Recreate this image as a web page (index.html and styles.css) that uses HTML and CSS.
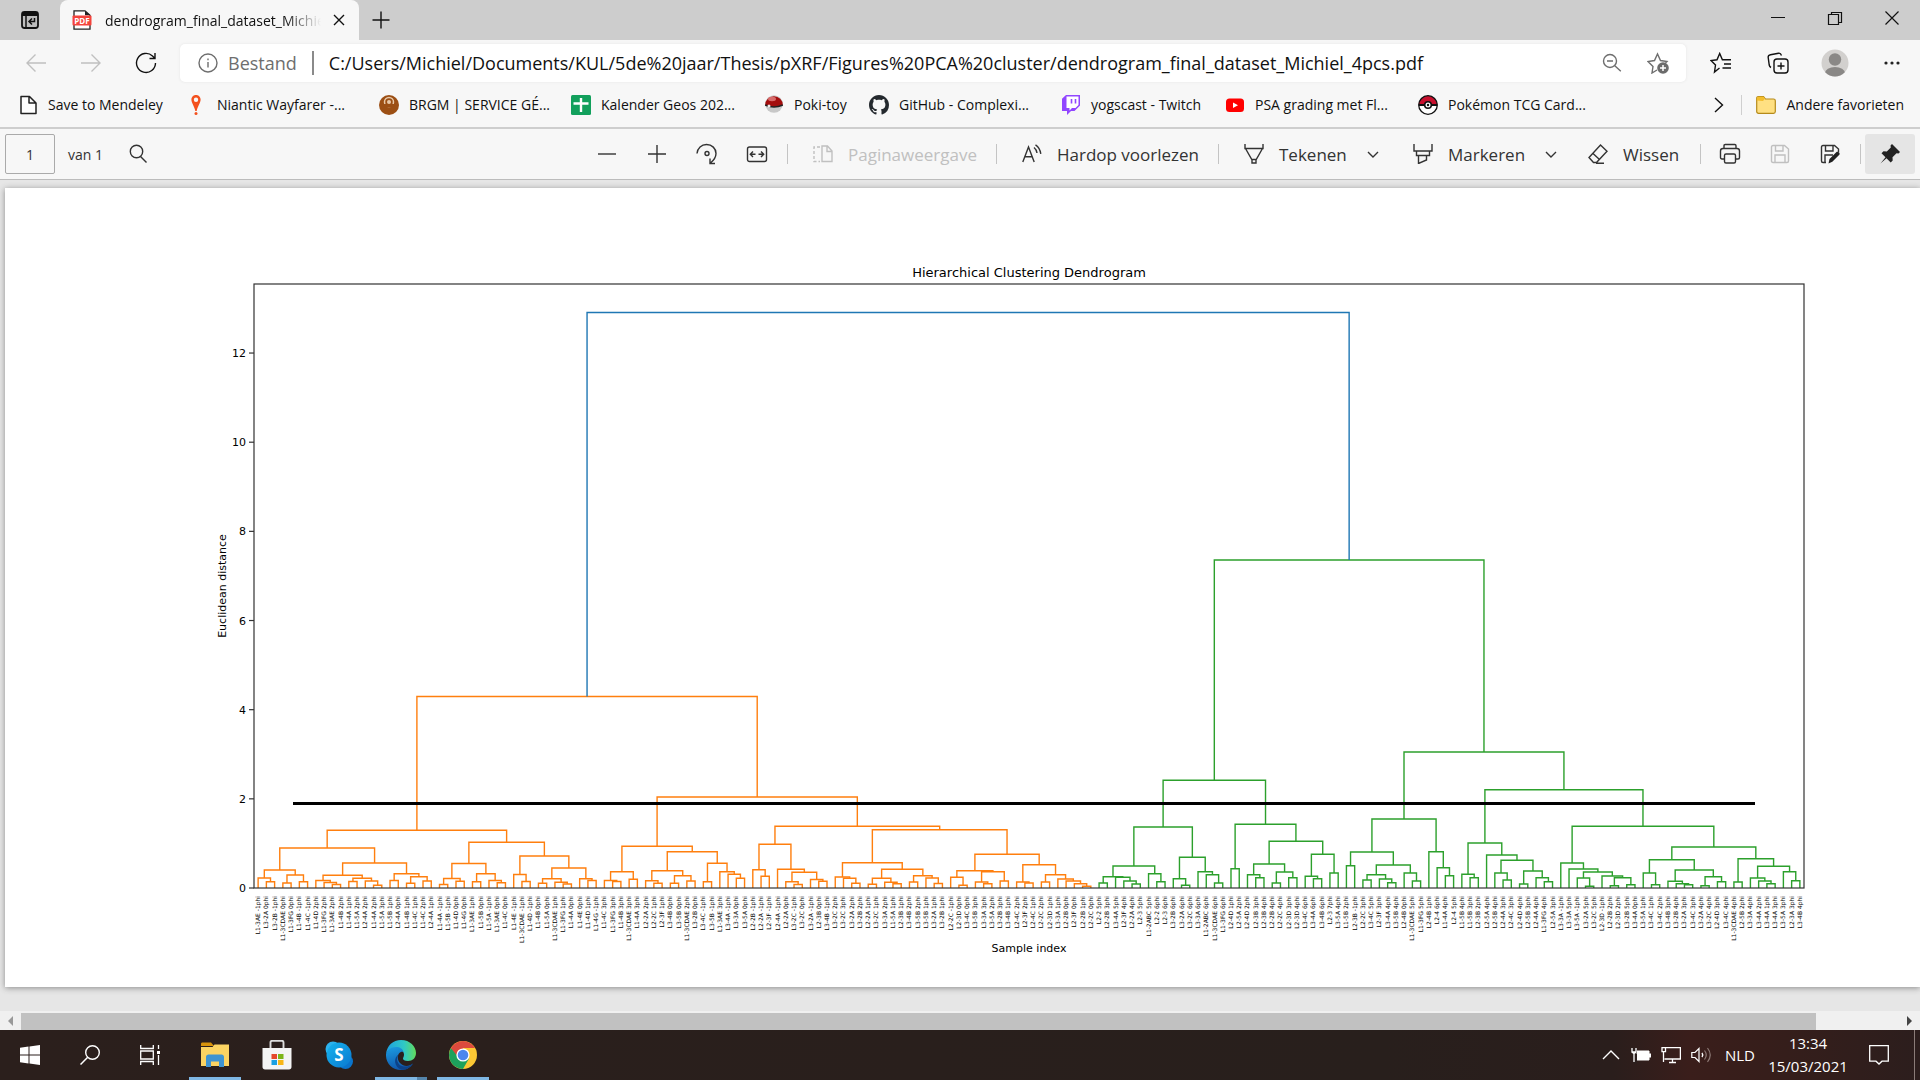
FILE: index.html
```html
<!DOCTYPE html>
<html lang="nl">
<head>
<meta charset="utf-8">
<title>dendrogram_final_dataset_Michiel_4pcs.pdf</title>
<link rel="stylesheet" href="styles.css">
</head>
<body>
<header class="tabstrip">
  <button class="tab-actions" aria-label="Tabbladacties"><svg class="i20" viewBox="0 0 20 20"><rect x="2" y="2" width="16" height="16" rx="2.5" fill="#bdbdbd" stroke="#111" stroke-width="1.8"/><path d="M2 4.5h16" stroke="#111" stroke-width="3"/><path d="M6 5v13" stroke="#111" stroke-width="1.5"/><path d="M14.5 8v3.500h-5M12 8.500l-3 3 3 3" fill="none" stroke="#111" stroke-width="1.5"/></svg></button>
  <div class="tab">
    <svg class="i20" viewBox="0 0 20 20"><path d="M2 .8h11l5 4.500v13.900H2z" fill="#fff" stroke="#222" stroke-width="1.300"/><path d="M13 .8v4.500h5" fill="#222"/><rect x=".5" y="5.500" width="19" height="10" rx="1" fill="#f4433c"/><text x="10" y="13.500" class="pdf-mark">PDF</text></svg>
    <span class="tab-title">dendrogram_final_dataset_Michiel_4pcs.pdf</span>
    <button class="tab-close" aria-label="Tabblad sluiten"><svg class="i16" viewBox="0 0 16 16"><path d="M3 3l10 10M13 3L3 13" class="ln dark"/></svg></button>
  </div>
  <button class="new-tab" aria-label="Nieuw tabblad"><svg class="i20" viewBox="0 0 20 20"><path d="M10 1.500v17M1.500 10h17" class="ln dark"/></svg></button>
  <div class="window-buttons">
    <button aria-label="Minimaliseren"><svg class="i16" viewBox="0 0 16 16"><path d="M1 7.500h14" stroke="#111"/></svg></button>
    <button aria-label="Vorig formaat"><svg class="i16" viewBox="0 0 16 16"><path d="M1.500 4.500h10v10h-10zM4.500 4.500v-2h10v10h-3" fill="none" stroke="#111" stroke-width="1.200"/></svg></button>
    <button aria-label="Sluiten"><svg class="i16" viewBox="0 0 16 16"><path d="M1.500 1.500l13 13M14.500 1.500l-13 13" stroke="#111" stroke-width="1.200"/></svg></button>
  </div>
</header>

<div class="navbar">
  <button class="nav-button" aria-label="Terug" disabled><svg class="i20" viewBox="0 0 20 20"><path d="M20 10H1M9.500 1.500L1 10l8.500 8.500" class="ln faint"/></svg></button>
  <button class="nav-button" aria-label="Vooruit" disabled><svg class="i20" viewBox="0 0 20 20"><path d="M0 10h19M10.500 1.500L19 10l-8.500 8.500" class="ln faint"/></svg></button>
  <button class="nav-button" aria-label="Vernieuwen"><svg class="i22" viewBox="0 0 22 22"><path d="M20.500 11A9.500 9.500 0 1 1 17.500 4l2 2M20 1v5.500h-5.500" class="ln dark"/></svg></button>
  <div class="address">
    <svg class="i20" viewBox="0 0 20 20"><circle cx="10" cy="10" r="9" class="ln grey"/><path d="M10 9v5.500M10 5.500v1.700" class="ln grey"/></svg>
    <label class="scheme" for="url">Bestand</label>
    <input id="url" class="url" type="text" value="C:/Users/Michiel/Documents/KUL/5de%20jaar/Thesis/pXRF/Figures%20PCA%20cluster/dendrogram_final_dataset_Michiel_4pcs.pdf">
    <button class="address-button" aria-label="Uitzoomen"><svg class="i20" viewBox="0 0 20 20"><circle cx="8" cy="8" r="6.500" class="ln grey"/><path d="M5 8h6M12.800 12.800l6 5.500" class="ln grey"/></svg></button>
    <button class="address-button" aria-label="Toevoegen aan favorieten"><svg class="i22" viewBox="0 0 22 22"><path d="M10 18l-5 3 1-6.500-5-5 6.500-1L10.500 2l3 6.500 6.500 1-2 2" class="ln grey"/><circle cx="16" cy="16" r="5.800" fill="#6b6b6b"/><path d="M16 13v6M13 16h6" stroke="#fff" stroke-width="1.500"/></svg></button>
  </div>
  <div class="nav-tools">
    <button aria-label="Favorieten"><svg class="i22" viewBox="0 0 22 22"><path d="M9.500 16l-5 4 1-7-4.500-4.500 6-.7L9.700 1.500l2.700 6.300h8.600M14 12h7M12.500 16h8.500" class="ln dark"/></svg></button>
    <button aria-label="Verzamelingen"><svg class="i22" viewBox="0 0 22 22"><rect x="7" y="7" width="14" height="14" rx="3" class="ln dark"/><path d="M14 10.500v7M10.500 14h7M4 15.500c-1-.5-1.500-1-1.800-2.500L1.200 5.500C1 4 2 3 3.500 2.700l8-1.500c1.800-.3 2.500.8 3 2.300" class="ln dark"/></svg></button>
    <button aria-label="Profiel"><svg class="i28" viewBox="0 0 28 28"><defs><clipPath id="face"><circle cx="14" cy="14" r="13.500"/></clipPath></defs><g clip-path="url(#face)"><rect width="28" height="28" fill="#d2d0ce"/><circle cx="14" cy="10.500" r="6.200" fill="#8a8886"/><ellipse cx="14" cy="24" rx="10" ry="6" fill="#8a8886"/></g></svg></button>
    <button aria-label="Meer"><svg class="i20" viewBox="0 0 20 20"><g fill="#222"><circle cx="4" cy="10" r="1.600"/><circle cx="10" cy="10" r="1.600"/><circle cx="16" cy="10" r="1.600"/></g></svg></button>
  </div>
</div>

<nav class="favorites">
  <div class="bookmarks">
    <a href="#"><svg class="i20" viewBox="0 0 20 20"><path d="M3 1.500h8.500L18 8v10.500H3zM11 1.500V8h7" fill="#fff" stroke="#222" stroke-width="1.500" stroke-linejoin="round"/></svg>Save to Mendeley</a>
    <a href="#"><svg class="i20" viewBox="0 0 20 20"><path fill-rule="evenodd" d="M9 0c3 0 4.600 2.300 4.600 4.600C13.600 8 10.800 11 9.700 16H8.300C7.200 11 4.400 8 4.400 4.600 4.400 2.300 6 0 9 0zm0 2.500a2.200 2.200 0 1 0 .01 4.400A2.200 2.200 0 0 0 9 2.500z" fill="#f4511e"/><circle cx="9" cy="18.500" r="1.500" fill="#f4511e"/></svg>Niantic Wayfarer -...</a>
    <a href="#"><svg class="i20" viewBox="0 0 20 20"><circle cx="10" cy="10" r="10" fill="#9c4f14"/><circle cx="10" cy="7" r="4.500" fill="none" stroke="#e8c8a8" stroke-width="1.500"/><circle cx="10" cy="7" r="2" fill="#e8c8a8"/><path d="M5 9h10v3H5z" fill="#9c4f14"/></svg>BRGM | SERVICE GÉ...</a>
    <a href="#"><svg class="i20" viewBox="0 0 20 20"><rect width="20" height="20" rx="1.500" fill="#12a05c"/><path d="M10 3v14M2.500 8.500h15" stroke="#fff" stroke-width="2.400"/></svg>Kalender Geos 202...</a>
    <a href="#"><svg class="i20" viewBox="0 0 20 20"><circle cx="10" cy="9" r="8.800" fill="#c8c8c8"/><path d="M1.200 10a8.800 8.800 0 1 1 17.600 0q-8.800 4-17.600 0z" fill="#a30d0d"/><ellipse cx="8" cy="4" rx="4" ry="2.200" fill="#d86a6a"/><path d="M1.200 10q8.800 4 17.600 0" stroke="#222" stroke-width="1.500" fill="none"/><circle cx="5" cy="11" r="1.500" fill="#eee"/></svg>Poki-toy</a>
    <a href="#"><svg class="i20" viewBox="0 0 16 16"><path fill="#24292e" d="M8 0C3.580 0 0 3.580 0 8c0 3.540 2.290 6.530 5.470 7.590.4.070.55-.17.55-.38 0-.19-.01-.82-.01-1.490-2.010.37-2.530-.49-2.690-.94-.09-.23-.48-.94-.82-1.130-.28-.15-.68-.52-.01-.53.63-.01 1.080.58 1.230.82.72 1.210 1.870.87 2.330.66.07-.52.28-.87.51-1.070-1.780-.2-3.640-.89-3.640-3.950 0-.87.31-1.590.82-2.150-.08-.2-.36-1.020.08-2.120 0 0 .67-.21 2.200.82.64-.18 1.320-.27 2-.27s1.360.09 2 .27c1.530-1.040 2.200-.82 2.200-.82.44 1.100.16 1.920.08 2.120.51.56.82 1.270.82 2.150 0 3.070-1.870 3.750-3.650 3.950.29.25.54.73.54 1.480 0 1.070-.01 1.930-.01 2.200 0 .21.15.46.55.38A8 8 0 0 0 16 8c0-4.420-3.580-8-8-8z"/></svg>GitHub - Complexi...</a>
    <a href="#"><svg class="i20" viewBox="0 0 20 20"><path d="M5 0L1 3.800V16h5v4l4-4h3.500L19 10.500V0z" fill="#9146ff"/><path d="M5.500 1.500h12V10l-3 3h-3.500L8.500 15.500V13h-3z" fill="#fff"/><path d="M10.500 4v4.500M14.500 4v4.500" stroke="#9146ff" stroke-width="1.600"/></svg>yogscast - Twitch</a>
    <a href="#"><svg class="i20" viewBox="0 0 20 20"><rect x="1" y="3.500" width="18" height="13.500" rx="3.500" fill="#f00"/><path d="M8 7.500l5 2.800-5 2.800z" fill="#fff"/></svg>PSA grading met Fl...</a>
    <a href="#"><svg class="i20" viewBox="0 0 20 20"><circle cx="10" cy="10" r="9.300" fill="#fff"/><path d="M.7 10a9.300 9.300 0 0 1 18.600 0z" fill="#c8102e"/><circle cx="10" cy="10" r="9.300" fill="none" stroke="#111" stroke-width="1.300"/><path d="M1 10h18" stroke="#111" stroke-width="2"/><circle cx="10" cy="10" r="3.300" fill="#fff" stroke="#111" stroke-width="1.600"/><circle cx="10" cy="10" r="1.200" fill="#111"/></svg>Pokémon TCG Card...</a>
  </div>
  <button class="more-favorites" aria-label="Meer favorieten"><svg class="i16" viewBox="0 0 16 16"><path d="M4 1l7.500 7L4 15" class="ln dark"/></svg></button>
  <a class="other" href="#"><svg class="i20" viewBox="0 0 20 20"><path d="M.7 3.500C.7 2 1.500 1.500 2.500 1.500h5l2 2.500h8c1.200 0 1.800.8 1.800 1.800V16.500c0 1-.8 1.800-1.800 1.800h-15C1.500 18.300.7 17.500.7 16.500z" fill="#ffe082" stroke="#b58a1b" stroke-width="1.200"/><path d="M.9 5.500V3.500c0-1 .6-1.800 1.600-1.800h5L9 3.800 7 6z" fill="#f3bd2c"/></svg>Andere favorieten</a>
</nav>

<div class="pdfbar">
  <input class="page-number" type="text" value="1" aria-label="Paginanummer">
  <span class="page-count">van 1</span>
  <button class="find" aria-label="Zoeken"><svg class="i20" viewBox="0 0 20 20"><circle cx="8.500" cy="7.500" r="6.200" class="ln"/><path d="M12.500 12.500l6 6" class="ln"/></svg></button>
  <div class="pdf-tools">
    <button class="tool" aria-label="Uitzoomen"><svg class="i20" viewBox="0 0 20 20"><path d="M1 10h18" class="ln"/></svg></button>
    <button class="tool" aria-label="Inzoomen"><svg class="i20" viewBox="0 0 20 20"><path d="M1 10h18M10 1v18" class="ln"/></svg></button>
    <button class="tool" aria-label="Draaien"><svg class="i22" viewBox="0 0 22 22"><path d="M1 10.500C1.500 5 5.500 1.500 10.500 1.500c5.500 0 9.500 4 9.500 9 0 4-2.500 7-5.500 9.500M19 20.500h-5v-5" class="ln"/><circle cx="11" cy="10.500" r="2" class="ln"/></svg></button>
    <button class="tool" aria-label="Aan breedte aanpassen"><svg class="i22" viewBox="0 0 22 22"><rect x="1.500" y="4" width="19" height="14.500" rx="2" class="ln"/><path d="M4.500 11.200h5M12.500 11.200h5M7 8.500l-2.700 2.700L7 14M15 8.500l2.700 2.700L15 14" class="ln"/></svg></button>
    <i class="sep"></i>
    <button class="tool view" disabled><svg class="i20" viewBox="0 0 20 20"><path d="M7 3H1v14.500h6" class="ln faint" stroke-dasharray="3 2"/><path d="M9 2h5.500L19 7v10.500H9zM14 2v5.500h5" class="ln faint"/></svg>Paginaweergave</button>
    <i class="sep"></i>
    <button class="tool aloud"><svg class="i20" viewBox="0 0 20 20"><path d="M.8 18L6.500 3l5.700 15M2.800 12.700h7.500M12 3.500q2.500 2 3 5.500M13.500.8q4.500 3 5.300 9" class="ln"/></svg>Hardop voorlezen</button>
    <i class="sep"></i>
    <button class="tool draw"><svg class="i20" viewBox="0 0 20 20"><path d="M1 0v4.500h18V0M1.500 4.500L8 16v3h4v-3l6.500-11.500M7.500 15.500h5" class="ln"/></svg>Tekenen</button>
    <button class="tool drop" aria-label="Tekenopties"><svg class="i16" viewBox="0 0 16 16"><path d="M3 6l5 5 5-5" class="ln"/></svg></button>
    <button class="tool mark"><svg class="i20" viewBox="0 0 20 20"><path d="M1 0v7h18V0M3.500 7v4.500h13V7M5.500 11.500V19.500l8-3.500v-4.500" class="ln"/></svg>Markeren</button>
    <button class="tool drop" aria-label="Markeeropties"><svg class="i16" viewBox="0 0 16 16"><path d="M3 6l5 5 5-5" class="ln"/></svg></button>
    <button class="tool erase"><svg class="i20" viewBox="0 0 20 20"><path d="M12.500 1L19 7.200 8.500 18.500H5.500L1 13.500zM5 9.500l6.500 6M8 19.300h8" class="ln"/></svg>Wissen</button>
    <i class="sep"></i>
    <button class="tool" aria-label="Afdrukken"><svg class="i22" viewBox="0 0 22 22"><path d="M5 5.500V2.700c0-.8.500-1.200 1.200-1.200h9.600c.7 0 1.200.4 1.200 1.200v2.800M5.500 16H3c-1 0-1.500-.7-1.500-1.500V8c0-1.500 1-2.500 2.500-2.500h14c1.500 0 2.500 1 2.500 2.500v6.500c0 .8-.5 1.500-1.500 1.500h-2.500" class="ln"/><rect x="5.500" y="11" width="11" height="9" rx="1.500" class="ln"/></svg></button>
    <button class="tool" aria-label="Opslaan" disabled><svg class="i20" viewBox="0 0 20 20"><path d="M3 1.500h11.500L18.500 5v12c0 1-.5 1.500-1.500 1.500H3c-1 0-1.500-.5-1.500-1.500V3c0-1 .5-1.500 1.500-1.500zM5.500 1.500V7H13V1.500M5 18.500V11h10v7.500" class="ln faint"/></svg></button>
    <button class="tool" aria-label="Opslaan als"><svg class="i20" viewBox="0 0 20 20"><path d="M18.500 8V5l-4-3.500H3C2 1.500 1.500 2 1.500 3v14c0 1 .5 1.500 1.500 1.500h3M5.500 1.500V7H13V1.500M5 18.500V11h8" class="ln"/><path d="M8.500 19.500l1-4.500L16.500 8c1.500-1 4 1 2.800 2.800l-7 7z" fill="#222"/></svg></button>
    <i class="sep"></i>
    <button class="tool pin" aria-label="Werkbalk losmaken"><svg class="i22" viewBox="0 0 22 22"><path d="M13 1l8 8-1.500 1.500-2-.3-4 4 .2 3.300-2 2L7.500 15.300 1.500 20.500l5-6.200L2.500 10.300l2-2 3.300.2 4-4-.3-2z" fill="#222"/></svg></button>
  </div>
</div>

<main class="viewer">
  <article class="sheet">
    <svg id="chart" class="chart" viewBox="0 0 1915 799" role="img" aria-label="Hierarchical Clustering Dendrogram"></svg>
  </article>
</main>
<div class="scrollbar"><button class="arrow prev" aria-label="Naar links"></button><div class="track"><div class="thumb"></div></div><button class="arrow next" aria-label="Naar rechts"></button></div>

<footer class="taskbar">
  <div class="apps">
    <button class="sys" aria-label="Start"><svg class="i20" viewBox="0 0 20 20"><path d="M0 2.800L8.500 1.600V9.500H0zM9.500 1.500L20 0v9.500H9.500zM0 10.500h8.500v7.900L0 17.200zM9.500 10.500H20V20L9.500 18.500z" fill="#fff"/></svg></button>
    <button class="sys" aria-label="Zoeken"><svg class="i20" viewBox="0 0 20 20"><circle cx="12.500" cy="7.500" r="6.800" fill="none" stroke="#fff" stroke-width="1.400"/><path d="M7.700 12.300L.5 19.500" stroke="#fff" stroke-width="1.500"/></svg></button>
    <button class="sys" aria-label="Taakweergave"><svg class="i20" viewBox="0 0 20 20"><path d="M.7 0v3.500h12.600V0M.7 20v-3.500h12.600V20M.7 6h12.600v8H.7zM18.500 0v4M18.500 10v10" fill="none" stroke="#fff" stroke-width="1.300"/><path d="M17 6h3v3h-3z" fill="#fff"/></svg></button>
    <button class="app open" aria-label="Verkenner"><svg class="i30" viewBox="0 0 30 30"><path d="M1 4c0-1 .5-1.500 1.500-1.500H11L14 6H1z" fill="#d8930b"/><path d="M1 7h11.500l2-2.500H29V26H1z" fill="#fcd462"/><path d="M6 27V17c0-1.500 1-2.500 2.500-2.500h13c1.500 0 2.500 1 2.500 2.500v10h-5v-5.500h-8V27z" fill="#3f94d1"/></svg></button>
    <button class="app" aria-label="Microsoft Store"><svg class="i30" viewBox="0 0 30 30"><path d="M8.500 9V2.500c0-1 .7-1.700 1.700-1.700h9.600c1 0 1.700.7 1.700 1.700V9" fill="none" stroke="#ddd" stroke-width="1.900"/><path d="M.5 8h29v19c0 1.500-1 2.500-2.500 2.500H3c-1.500 0-2.500-1-2.500-2.500z" fill="#f4f4f4"/><path d="M9.500 14H15v5H9.500z" fill="#e5482b"/><path d="M16 14h5.500v5H16z" fill="#7cb518"/><path d="M9.500 20H15v5H9.500z" fill="#1ba0e2"/><path d="M16 20h5.500v5H16z" fill="#f8b617"/></svg></button>
    <button class="app" aria-label="Skype"><svg class="i30" viewBox="0 0 30 30"><defs><linearGradient id="sk" x2="1" y2="1"><stop stop-color="#16b4ee"/><stop offset="1" stop-color="#0a78d0"/></linearGradient></defs><circle cx="9" cy="9" r="7.500" fill="#2cb2ee"/><circle cx="21.500" cy="21.500" r="7.500" fill="#0a74cc"/><circle cx="15" cy="15" r="12.500" fill="url(#sk)"/><text x="15" y="21" class="skype-mark">S</text></svg></button>
    <button class="app open grouped" aria-label="Microsoft Edge"><svg class="i30" viewBox="0 0 30 30"><defs><linearGradient id="e1"><stop stop-color="#1d9fe0"/><stop offset=".6" stop-color="#2fc8c6"/><stop offset="1" stop-color="#62db5c"/></linearGradient><linearGradient id="e2" x2=".3" y2="1"><stop stop-color="#1b9de2"/><stop offset="1" stop-color="#1059ad"/></linearGradient></defs><path d="M0 14C1 5.500 7 0 15 0c9 0 15 6.500 15 13 0 5-3.500 8-8 8-3.500 0-5-1-5-2.500 0-1 1-1.500 1-4C18 11 14 8 10 8 5 8 1 11 0 14z" fill="url(#e1)"/><path d="M0 14c1-4 5-7 10-7 4 0 7 2 7.500 5-5-1.500-8 6-3.500 11 4 4 9 3.500 13 .5C24 28 20 30 15 30 6 30-.5 23 0 14z" fill="url(#e2)"/><path d="M13 14c-4 5-1 11 3 12 4 1.500 8 0 11.200-2.800C24 28 20 30 15.500 29.800 8 27 7 18 13 14z" fill="#0d4288"/></svg></button>
    <button class="app open" aria-label="Google Chrome"><svg class="i30" viewBox="0 0 30 30"><circle cx="15" cy="15" r="14" fill="#fbc734"/><path d="M15 15L2.880 8A14 14 0 0 0 15 29l6-10.500z" fill="#1da15c"/><path d="M15 15H8.500L2.880 8A14 14 0 0 1 27.120 8H15z" fill="#dc4a3d"/><circle cx="15" cy="15" r="6.600" fill="#fff"/><circle cx="15" cy="15" r="5.300" fill="#4b87ee"/></svg></button>
  </div>
  <div class="tray">
    <button aria-label="Verborgen pictogrammen"><svg class="i20" viewBox="0 0 20 20"><path d="M2 14l8-8 8 8" class="ln white"/></svg></button>
    <button aria-label="Batterij"><svg class="i20" viewBox="0 0 20 20"><path d="M5 6h13v9H5z" fill="#fff" stroke="#fff"/><path d="M19 8.500v4" stroke="#fff" stroke-width="2"/><path d="M2 17h2.500V9M1.500 4v3.500q1.500 2 3 0V4M1 5h5M3 8.500V17" fill="none" stroke="#2b1f1d" stroke-width="3"/><path d="M3 17V9M1 3v4h4V3M1 7q2 3 4 0" fill="none" stroke="#fff" stroke-width="1.300"/></svg></button>
    <button aria-label="Netwerk"><svg class="i20" viewBox="0 0 20 20"><path d="M5 2.700h14.400V14H3.500M11.500 14v3.500M8 17.500h7M2.500 17V7M1 2.700h3.500v4H1z" fill="none" stroke="#fff" stroke-width="1.300"/></svg></button>
    <button aria-label="Volume"><svg class="i20" viewBox="0 0 20 20"><path d="M.8 7.500H4l4-4v13l-4-4H.8z" fill="none" stroke="#fff" stroke-width="1.200"/><path d="M11 8q1.500 2 0 4" class="ln white"/><path d="M13.500 5.500q3.500 4.500 0 9M16.500 3q5.500 7 0 14" fill="none" stroke="#8d7a76" stroke-width="1.200"/></svg></button>
    <span class="lang">NLD</span>
    <time class="clock" datetime="2021-03-15T13:34">13:34<br>15/03/2021</time>
    <button class="notify" aria-label="Meldingen"><svg class="i20" viewBox="0 0 20 20"><path d="M.7.7h18.600v15.500H13L10 19l-3-2.800H.7z" fill="none" stroke="#fff" stroke-width="1.300"/></svg></button>
    <i class="peek"></i>
  </div>
</footer>
<script src="chart.js"></script>
</body>
</html>
```

FILE: styles.css
```css
* { box-sizing: border-box; }
body {
  margin: 0;
  min-height: 100vh;
  display: flex;
  flex-direction: column;
  background: #e6e6e6;
  color: #111;
  font-family: "Open Sans", "Noto Sans", sans-serif;
  font-size: 14px;
  overflow: hidden;
}
button, input { font: inherit; color: inherit; border: 0; background: none; padding: 0; margin: 0; }
button { display: flex; align-items: center; justify-content: center; }
a { color: inherit; text-decoration: none; }
svg { display: block; flex: none; }
.i16 { width: 16px; height: 16px; }
.i20 { width: 20px; height: 20px; }
.i22 { width: 22px; height: 22px; }
.i28 { width: 28px; height: 28px; }
.i30 { width: 30px; height: 30px; }
.ln { fill: none; stroke: #333; stroke-width: 1.4; }
.ln.dark { stroke: #111; }
.ln.grey { stroke: #6e6e6e; }
.ln.faint { stroke: #c0c0c0; }
.ln.white { stroke: #fff; }
.pdf-mark { font: bold 8px "Open Sans", sans-serif; fill: #fff; text-anchor: middle; }
.skype-mark { font: bold 17px "Open Sans", sans-serif; fill: #fff; text-anchor: middle; }

.tabstrip { display: flex; height: 40px; background: #cdcdcd; }
.tab-actions { width: 60px; }
.tab {
  width: 299px;
  display: flex;
  align-items: center;
  padding: 0 12px;
  background: #f7f7f7;
  border-radius: 8px 8px 0 0;
}
.tab-title {
  width: 218px;
  margin: 0 8px 0 13px;
  overflow: hidden;
  white-space: nowrap;
  mask-image: linear-gradient(to right, #000 180px, transparent 216px);
}
.new-tab { width: 44px; }
.window-buttons { margin-left: auto; display: flex; }
.window-buttons button { width: 57px; height: 36px; }

.navbar { display: flex; align-items: center; height: 46px; padding-left: 8px; background: #f7f7f7; }
.nav-button { width: 55px; height: 40px; }
.address {
  flex: 1;
  display: flex;
  align-items: center;
  height: 38px;
  margin-left: 7px;
  padding: 0 5px 0 18px;
  background: #fff;
  border-radius: 5px;
  box-shadow: 0 0 3px #e4e4e4;
}
.scheme { font-size: 18px; color: #6e6e6e; margin-left: 10px; padding-right: 15px; }
.url { flex: 1; height: 24px; border-left: 2px solid #8a8a8a; padding-left: 15px; font-size: 18px; }
.address-button { width: 46px; }
.nav-tools { display: flex; padding-left: 6px; }
.nav-tools button { width: 57px; height: 38px; }

.favorites {
  display: flex;
  align-items: center;
  height: 43px;
  padding: 0 16px 4px 18px;
  background: #f7f7f7;
  border-bottom: 2px solid #cecece;
}
.bookmarks {
  flex: 1;
  display: grid;
  grid-template-columns: 169px 192px 192px 193px 105px 192px 164px 193px auto;
}
.favorites a { display: flex; align-items: center; gap: 10px; white-space: nowrap; }
.more-favorites { width: 44px; }
.other { border-left: 1px solid #cfcfcf; padding-left: 14px; }

.pdfbar {
  display: flex;
  align-items: center;
  height: 51px;
  padding: 0 5px;
  background: #f7f7f7;
  border-bottom: 1px solid #bcbcbc;
  color: #333;
}
.page-number { width: 50px; height: 40px; border: 1px solid #aaa; border-radius: 2px; text-align: center; }
.page-count { margin-left: 13px; width: 44px; }
.find { width: 52px; height: 40px; }
.pdf-tools { margin-left: auto; display: flex; align-items: center; font-size: 17px; }
.tool { width: 50px; height: 40px; gap: 15px; white-space: nowrap; }
.tool:disabled { color: #c0c0c0; }
.sep { width: 10px; height: 20px; background: linear-gradient(#c4c4c4, #c4c4c4) center / 1px 100% no-repeat; }
.view, .aloud, .draw, .mark, .erase { justify-content: flex-start; padding-left: 21px; }
.view { width: 199px; }
.aloud { width: 212px; }
.draw { width: 130px; }
.mark { width: 139px; }
.erase { width: 125px; padding-left: 18px; }
.drop { width: 39px; }
.pin { background: #e5e5e5; border-radius: 3px; }

.viewer { flex: 1; padding: 8px 0 24px 5px; background: #e6e6e6; }
.sheet { background: #fff; box-shadow: 0 1px 6px #8c8c8c; }
.chart { width: 100%; height: auto; }
.chart text { font-family: "DejaVu Sans", sans-serif; font-size: 12px; fill: #000; }
.chart .title { font-size: 13px; text-anchor: middle; }
.chart .caption { font-size: 11px; text-anchor: middle; }
.chart .tick { font-size: 11px; text-anchor: end; }
.chart .leaf { font-size: 6px; text-anchor: end; }
.chart .axis { fill: none; stroke: #333; stroke-width: 1.2; }
.chart .link { fill: none; stroke-width: 1.4; }
.chart .cut { stroke: #000; stroke-width: 3; }

.scrollbar { display: flex; height: 19px; background: #f0f0f0; }
.arrow { width: 21px; }
.arrow::before { content: ""; border: 5px solid transparent; }
.prev::before { border-right-color: #999; border-left-width: 0; }
.next::before { border-left-color: #444; border-right-width: 0; }
.track { flex: 1; padding-top: 2px; }
.thumb { width: 95.6%; height: 17px; background: #c1c1c1; }

.taskbar {
  display: flex;
  justify-content: space-between;
  height: 50px;
  color: #fff;
  background: linear-gradient(90deg, #2b1f1c 0%, #281f1c 72%, #2a1e1c 84%, #3a1e1b 88%, #351e1b 93%, #2c1e1d 100%);
}
.apps, .tray { display: flex; }
.sys { width: 60px; }
.app { width: 52px; margin-right: 10px; border-bottom: 3px solid transparent; padding-top: 3px; }
.apps .sys:nth-child(3) { margin-right: 9px; }
.open { border-bottom-color: #7fb7e4; }
.grouped { border-image: linear-gradient(90deg, #7fb7e4 78%, #5585ab 78%) 3; }
.tray { align-items: center; font-size: 15px; }
.tray button { width: 30px; height: 50px; }
.lang { width: 36px; margin-left: 9px; }
.clock { width: 86px; margin-left: 4px; text-align: center; line-height: 23px; }
.tray .notify { width: 56px; }
.peek { width: 6px; height: 50px; margin-left: 7px; border-left: 1px solid #8a7c78; }
```

FILE: chart.js
```js
// A cluster is [height above the baseline, left, right]; L is a single sample.
const L = 0;
const orange1 = [57.7,
  [40,
    [18, [10, L, [6.3, L, L]], [13, [5, L, L], [6.3, L, L]]],
    [25,
      [12.7, [7.5, L, [5.5, L, [3.5, L, L]]], [9.7, [6.5, L, L], [7, L, [2.7, L, L]]]],
      [14.3, [7.5, L, L], [11.3, [4.7, L, L], [7, L, L]]]]],
  [45.7,
    [24.5, [9.5, [3.5, L, L], [6.7, L, L]], [14.3, [6.3, L, L], [7.5, L, [5.3, L, L]]]],
    [32,
      [13.5, L, [6.5, L, L]],
      [20, [9.3, [4.7, L, L], [5.7, L, [4, L, L]]], [9.3, L, [7.5, L, L]]]]]];
const orange2 = [91,
  [41.7,
    [16.3, [7.5, L, [6.5, L, L]], [8.7, L, L]],
    [36.3,
      [17.3, [7.3, L, [4.7, L, L]], [12.3, [4.7, L, L], [7, L, L]]],
      [24.7, [6.3, L, L], [16.3, L, [13.7, L, [9.7, L, L]]]]]],
  [61.7,
    [43.7,
      [18.3, L, [11.7, L, L]],
      [18.7, L, [15.7, [6.3, L, [3.5, L, L]], [8.5, L, [6.7, L, L]]]]],
    [58.3,
      [25.3,
        [11, L, [9.7, L, [4.7, L, L]]],
        [18.7, [9.7, [3.7, L, L], [5.7, L, [4.3, L, L]]], [12.3, [6, L, L], [10, L, [4.5, L, L]]]]],
      [33.7,
        [17.3, [10.7, L, [2.7, L, L]], [16.3, [6, L, [4.3, L, L]], [7, L, L]]],
        [23.3,
          [6, L, [5, L, L]],
          [13.3, [6, L, L], [9, L, [7, L, [4.3, L, [1.7, L, L]]]]]]]]]];
const green1 = [107.7,
  [61,
    [22, [11.3, [5, L, L], [10.7, L, [7, L, [4, L, L]]]], [14.3, L, [6.3, L, L]]],
    [30.7, [9.3, L, [2.7, L, L]], [16.3, L, [13.3, L, [5, L, L]]]]],
  [63.7,
    [19.3, L, L],
    [46.7,
      [24, [13.3, L, [10.3, L, L]], [16, [5, L, L], [10.3, L, L]]],
      [33.7, [11.7, L, [9.3, L, L]], [15, L, L]]]]];
const green2 = [136,
  [69,
    [36,
      [22.3, L, L],
      [23, [13.3, [8, L, L], [9, L, [5.3, L, L]]], [15, L, [7, L, L]]]],
    [36.3, L, [20.3, L, [12.3, L, L]]]],
  [98.3,
    [45,
      [13.7, L, [10.3, L, L]],
      [33, L, [27.7, [15, L, [8, L, L]], [17, [4, L, L], [10.3, L, [6.3, L, L]]]]]],
    [61.7,
      [25, L, [19, L, [16, [10, L, [1.7, L, L]], [12, L, [10.3, [2.3, L, L], [3.3, L, L]]]]]],
      [41,
        [28.3,
          [15, L, [3.3, L, L]],
          [18, [6.7, L, [4.3, L, [3.3, L, L]]], [11.3, [2.3, L, L], [6.3, L, L]]]],
        [29.3,
          [6, L, L],
          [21.7, [10, L, [7, L, [4.3, L, L]]], [16.3, L, [7.3, L, L]]]]]]]];

const samples = `L1-3AE -1|L3-2A 0|L3-2B -1|L1-3CDAE 0|L1-3FG 0|L1-4B -1|L1-4C -1|L1-4D 2|L1-3FG 2|L1-3AE 2|L1-4B 2|L1-4A 1|L1-5A 2|L2-4A 2|L1-4A 2|L1-5A 3|L1-5B 1|L2-4A 0|L1-4B 1|L1-4C 1|L1-4C 2|L2-4A 1|L1-4A -1|L1-5B -1|L1-4D 0|L1-4G 0|L1-3AE 1|L1-5B 0|L1-5A -1|L1-3AE 0|L1-4C 0|L1-4E -1|L1-3CDAE -1|L1-4D -1|L1-4B 0|L1-5A 0|L1-3CDAE 1|L1-3FG 1|L1-4A 0|L1-4E 0|L1-4D 1|L1-4G -1|L1-4C 3|L1-3FG 3|L1-4B 3|L1-3CDAE 3|L1-4A 3|L2-2A 2|L2-2C 1|L2-3F 1|L3-4B 0|L3-5B 0|L1-3CDAE 2|L3-2B 0|L3-4C -1|L3-5B -1|L1-3AE 3|L3-4A -1|L3-3A 0|L3-5A 0|L2-2B -1|L2-2A -1|L2-3F -1|L2-4A -1|L2-2A 0|L3-2C -1|L3-2C 0|L3-2A -1|L2-3B 0|L3-4B -1|L3-2C 2|L3-2C 3|L3-2A 2|L3-2B 2|L2-2A 1|L3-2C 1|L3-3A 2|L1-5A 1|L2-3B 1|L3-4B 2|L3-5B 2|L3-5B 1|L3-2A 1|L3-2B 1|L2-2C -1|L2-3D 0|L3-4C 0|L3-5B 3|L3-3A 3|L3-5A 2|L3-2B 3|L3-4B 1|L2-4C 2|L2-3F 2|L2-4C 1|L2-2C 2|L2-3D 1|L3-3A 1|L2-2B 0|L2-3F 0|L2-2B 1|L2-2C 0|L2-2 5|L2-2B 3|L3-4A 5|L2-3F 4|L2-2A 4|L2-3 5|L1-2ABC 5|L2-2 6|L2-3 6|L3-2B 6|L3-2A 6|L3-2C 6|L3-3A 6|L1-2ABC 6|L1-3CDAE 6|L1-3FG 6|L2-4D 1|L2-5A 2|L2-4D 2|L2-3B 3|L2-3B 4|L2-2B 4|L2-2C 4|L2-3D 3|L2-3D 4|L3-4C 6|L3-4A 6|L3-4B 6|L2-3 7|L3-5A 4|L1-5B 2|L2-3B -1|L2-2C 3|L3-4C 5|L2-3F 3|L3-4A 4|L3-5B 4|L2-4B 0|L1-3CDAE 5|L1-3FG 5|L2-4B 1|L2-4 6|L1-4A 4|L2-4 5|L1-5B 4|L1-5B 3|L2-3B 2|L2-5A 4|L2-5B 4|L2-4A 3|L2-4C 3|L2-4D 4|L2-5B 3|L2-4A 4|L1-3FG 4|L2-5A 3|L3-3A -1|L3-3A 5|L3-5A -1|L3-2A 5|L3-2C 5|L2-3D -1|L2-2B 2|L2-3D 2|L3-2B 5|L3-4A 0|L3-5A 1|L3-4C 1|L3-4C 2|L3-4B 3|L3-2B 4|L3-2A 3|L3-4C 3|L3-2A 4|L3-2C 4|L2-4D 3|L3-4C 4|L1-3CDAE 4|L2-5B 2|L3-3A 4|L3-4A 2|L3-4A 1|L3-4A 3|L3-5A 3|L2-3A 3|L3-4B 4`.split('|');

const left = 249, right = 1799, top_ = 96, base = 700;
const step = (right - left) / samples.length;
const svg = document.getElementById('chart');

function add(tag, attrs, text) {
  const el = document.createElementNS('http://www.w3.org/2000/svg', tag);
  for (const k in attrs) el.setAttribute(k, attrs[k]);
  if (text) el.textContent = text;
  svg.appendChild(el);
}

let next = 0;
function place(node, color) {
  if (node === L) return { x: left + (next++ + 0.5) * step, y: base };
  const a = place(node[1], color);
  const b = place(node[2], color);
  const y = base - node[0];
  add('path', { class: 'link', stroke: color, d: `M${a.x} ${a.y}V${y}H${b.x}V${b.y}` });
  return { x: (a.x + b.x) / 2, y };
}
function join(h, a, b, color) {
  const y = base - h;
  add('path', { class: 'link', stroke: color, d: `M${a.x} ${a.y}V${y}H${b.x}V${b.y}` });
  return { x: (a.x + b.x) / 2, y };
}

const orange = '#ff7f0e', green = '#2ca02c', blue = '#1f77b4';
const o = join(191.5, place(orange1, orange), place(orange2, orange), orange);
const g = join(328, place(green1, green), place(green2, green), green);
join(575.5, o, g, blue);

add('line', { class: 'cut', x1: 288, x2: 1750, y1: 615.5, y2: 615.5 });
add('rect', { class: 'axis', x: left, y: top_, width: right - left, height: base - top_ });
for (let v = 0; v <= 12; v += 2) {
  const y = base - v * 44.58;
  add('path', { class: 'axis', d: `M${left} ${y}h-5` });
  add('text', { class: 'tick', x: left - 8, y: y + 4 }, String(v));
}
samples.forEach((s, i) => {
  const x = left + (i + 0.5) * step + 2;
  add('text', { class: 'leaf', transform: `translate(${x} 708) rotate(-90)` }, s + 'phi');
});
add('text', { class: 'title', x: 1024, y: 89 }, 'Hierarchical Clustering Dendrogram');
add('text', { class: 'caption', x: 1024, y: 764 }, 'Sample index');
add('text', { class: 'caption', transform: 'translate(221 398) rotate(-90)' }, 'Euclidean distance');
```
